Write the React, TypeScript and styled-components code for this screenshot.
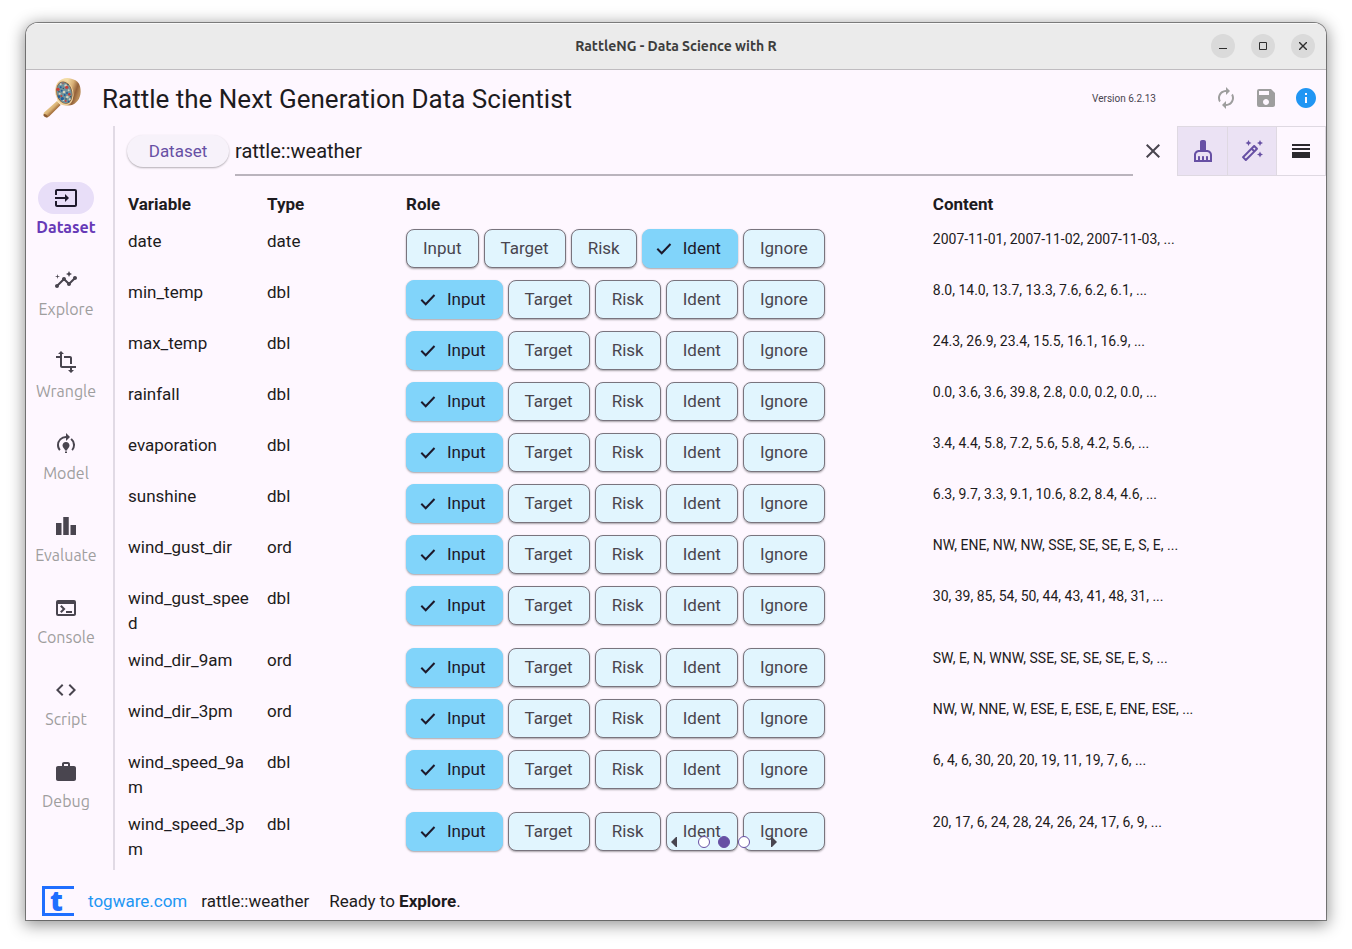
import React, { useState } from 'react';
import styled, { createGlobalStyle } from 'styled-components';
import {
  MdInput, MdInsights, MdTransform, MdModelTraining, MdLeaderboard, MdTerminal, MdCode, MdWork,
  MdAutorenew, MdSave, MdInfo, MdClear, MdOutlineAutoFixHigh, MdHorizontalSplit,
} from 'react-icons/md';

const GlobalStyle = createGlobalStyle`
  *, *::before, *::after { box-sizing: border-box; }
  body {
    margin: 0;
    background: #ffffff;
    color: #1d1b20;
    font-family: Roboto, "Liberation Sans", sans-serif;
    font-size: 17px;
    line-height: 25px;
  }
  button { font: inherit; color: inherit; border: 0; padding: 0; background: none; cursor: pointer; }
`;

const AppWindow = styled.div`
  display: flex;
  flex-direction: column;
  min-height: calc(100vh - 52px);
  margin: 23px 26px 29px;
  background: #fef7ff;
  border-radius: 12px 12px 0 0;
  overflow: hidden;
  box-shadow: 0 0 0 1px rgba(0, 0, 0, 0.42), 0 3px 16px 2px rgba(0, 0, 0, 0.42);
`;

const TitleBar = styled.header`
  display: grid;
  grid-template-columns: 1fr auto 1fr;
  align-items: center;
  height: 47px;
  padding: 0 11px;
  background: #ebebeb;
  border-bottom: 1px solid #bfbcc0;
  box-shadow: inset 0 1px 0 #f9f9f9;
`;

const WindowTitle = styled.div`
  grid-column: 2;
  font: 700 14px/20px Ubuntu, "Open Sans", sans-serif;
  color: #3d3d3d;
`;

const WindowControls = styled.div`
  display: flex;
  justify-content: flex-end;
  gap: 16px;
`;

const WindowButton = styled.button`
  display: grid;
  place-items: center;
  width: 24px;
  height: 24px;
  border-radius: 50%;
  background: #dadada;
  color: #2e2e2e;
`;

const AppBar = styled.div`
  display: flex;
  align-items: center;
  height: 56px;
  padding: 0 0 0 16px;
`;

const AppTitle = styled.h1`
  flex: 1;
  margin: 0 0 0 20px;
  padding-top: 2px;
  font-size: 26px;
  line-height: 32px;
  font-weight: 400;
`;

const Version = styled.span`
  margin-right: 50px;
  padding-top: 2px;
  font-size: 10px;
  line-height: 16px;
  color: #49454f;
`;

const BarButton = styled.button<{ $color: string }>`
  display: grid;
  place-items: center;
  width: 40px;
  height: 40px;
  font-size: 24px;
  color: ${(p) => p.$color};
`;

const BarActions = styled.div`
  display: flex;
`;

const Main = styled.div`
  display: flex;
  flex: 1;
`;

const Rail = styled.nav`
  display: flex;
  flex-direction: column;
  flex: none;
  gap: 24px;
  width: 89px;
  padding: 56px 7px 0 0;
  border-right: 2px solid #e1dae5;
`;

const RailItem = styled.button<{ $active: boolean }>`
  display: flex;
  flex-direction: column;
  align-items: center;
  height: 58px;
  font: ${(p) => (p.$active ? 700 : 400)} 16px/26px Ubuntu, "Noto Sans", sans-serif;
  color: ${(p) => (p.$active ? '#673ab7' : '#9e9e9e')};
`;

const RailIcon = styled.span<{ $active: boolean }>`
  display: grid;
  place-items: center;
  width: 56px;
  height: 32px;
  border-radius: 16px;
  font-size: 24px;
  background: ${(p) => (p.$active ? '#e8def8' : 'transparent')};
  color: ${(p) => (p.$active ? '#1d192b' : '#49454f')};
`;

const Content = styled.main`
  position: relative;
  flex: 1;
  min-width: 0;
`;

const SourceBar = styled.div`
  display: flex;
  align-items: flex-start;
  padding-left: 12px;
`;

const DatasetButton = styled.button`
  flex: none;
  width: 102px;
  height: 32px;
  margin-top: 9px;
  border-radius: 16px;
  background: #f7f2fa;
  color: #6750a4;
  box-shadow: 0 1px 2px rgba(0, 0, 0, 0.3);
`;

const PathInput = styled.input`
  flex: 1;
  min-width: 0;
  height: 50px;
  margin-left: 6px;
  padding: 2px 0 0;
  border: 0;
  border-bottom: 2px solid #bab4bd;
  outline: 0;
  background: transparent;
  color: #1d1b20;
  font: 400 20px/28px Roboto, sans-serif;
`;

const ClearButton = styled.button`
  display: grid;
  place-items: center;
  width: 40px;
  height: 50px;
  margin-right: 4px;
  font-size: 24px;
  color: #49454f;
`;

const Toggles = styled.div`
  display: flex;
  border: 1px solid #dfd9e2;
`;

const Toggle = styled.button<{ $on: boolean }>`
  display: grid;
  place-items: center;
  width: 49px;
  height: 48px;
  font-size: 24px;
  background: ${(p) => (p.$on ? '#ebe2f4' : 'transparent')};
  color: ${(p) => (p.$on ? '#6750a4' : '#2b292e')};
  & + & { border-left: 1px solid #dfd9e2; }
`;

const VariableTable = styled.table`
  width: 100%;
  margin-top: 16px;
  border-collapse: collapse;
  table-layout: fixed;
`;

const HeadCell = styled.th<{ $width?: string }>`
  width: ${(p) => p.$width ?? 'auto'};
  padding: 0 12px 0 13px;
  text-align: left;
  font-weight: 700;
`;

const Cell = styled.td`
  padding: 12px 0 0 13px;
  vertical-align: top;
  overflow-wrap: anywhere;
`;

const ContentCell = styled(Cell)`
  font-size: 14px;
  line-height: 20px;
`;

const Chips = styled.div`
  display: flex;
  gap: 5px;
`;

const Chip = styled.button<{ $selected: boolean }>`
  display: flex;
  align-items: center;
  gap: 11px;
  height: 39px;
  padding: 0 16px 0 ${(p) => (p.$selected ? 13 : 16)}px;
  border: 1px solid ${(p) => (p.$selected ? '#81d4fa' : '#79747e')};
  border-radius: 8px;
  background: ${(p) => (p.$selected ? '#81d4fa' : '#e1f5fe')};
  color: ${(p) => (p.$selected ? '#1d192b' : '#49454f')};
  box-shadow: 0 1px 2px rgba(0, 0, 0, 0.35);
`;

const Pager = styled.div`
  position: absolute;
  left: 6px;
  right: 0;
  bottom: 22px;
  display: flex;
  align-items: center;
  justify-content: center;
  gap: 8px;
  height: 12px;
`;

const Dot = styled.button<{ $current: boolean }>`
  width: 12px;
  height: 12px;
  border: 1px solid #6750a4;
  border-radius: 50%;
  background: ${(p) => (p.$current ? '#6750a4' : '#ffffff')};
`;

const PagerArrow = styled.button`
  display: grid;
  width: 32px;
  place-items: center;
  color: #49454f;
`;

const StatusBar = styled.footer`
  display: flex;
  align-items: center;
  height: 50px;
  padding: 12px 16px 0;
`;

const SiteLink = styled.a`
  margin: 0 14px;
  color: #2196f3;
  text-decoration: none;
`;

const StatusText = styled.span`
  margin-left: 20px;
`;

const MagnifierLogo = () => (
  <svg width="40" height="42" viewBox="12 12 120 126" aria-hidden="true">
    <defs>
      <linearGradient id="barrel" x1="0" y1="0" x2="1" y2="0.4">
        <stop offset="0.4" stopColor="#f3dca6" />
        <stop offset="0.65" stopColor="#d7ae74" />
        <stop offset="0.85" stopColor="#94623a" />
        <stop offset="1" stopColor="#b98c58" />
      </linearGradient>
      <linearGradient id="handle" x1="0" y1="0" x2="0.6" y2="0.6">
        <stop offset="0.3" stopColor="#f6e0ae" />
        <stop offset="0.8" stopColor="#d9b274" />
        <stop offset="1" stopColor="#a87442" />
      </linearGradient>
    </defs>
    <path d="M19 118 57 84l11 12-34 34c-5 4-11 4-15-1-3-3-3-8 0-11z" fill="url(#handle)" />
    <path d="M18 123c3-1 10 3 12 9-5 3-9 1-12-2-2-2-2-5 0-7z" fill="#8b5a33" />
    <path d="M58 30C68 16 86 13 100 17c19 4 29 17 28 40-1 21-13 36-30 40-18 2-33 0-40-12z" fill="url(#barrel)" />
    <ellipse cx="79" cy="59" rx="27" ry="38" transform="rotate(-14 79 59)" fill="#ecd09a" />
    <ellipse cx="79" cy="59" rx="24" ry="34" transform="rotate(-14 79 59)" fill="#8a5b38" />
    <ellipse cx="79" cy="59" rx="22" ry="32" transform="rotate(-14 79 59)" fill="#6f929c" />
    <g fill="#d8d2bb">
      <circle cx="68" cy="34" r="3" /><circle cx="83" cy="38" r="4" /><circle cx="92" cy="52" r="3" />
      <circle cx="78" cy="57" r="4" /><circle cx="65" cy="62" r="3" /><circle cx="88" cy="72" r="4" />
      <circle cx="95" cy="79" r="3" /><circle cx="76" cy="81" r="3" />
    </g>
    <g fill="#c8403a">
      <circle cx="60" cy="49" r="5" /><circle cx="86" cy="43" r="5" /><circle cx="70" cy="69" r="3" />
      <circle cx="94" cy="64" r="4" /><circle cx="83" cy="84" r="3" /><circle cx="75" cy="31" r="2" />
    </g>
    <g fill="#245f9a">
      <circle cx="68" cy="43" r="3" /><circle cx="71" cy="53" r="3" /><circle cx="63" cy="71" r="4" />
      <circle cx="73" cy="77" r="5" /><circle cx="87" cy="60" r="3" /><circle cx="92" cy="86" r="3" />
      <circle cx="80" cy="66" r="3" />
    </g>
    <g fill="#31454a">
      <circle cx="76" cy="46" r="2" /><circle cx="63" cy="56" r="2" /><circle cx="84" cy="78" r="2" />
      <circle cx="98" cy="71" r="2" /><circle cx="90" cy="34" r="2" />
    </g>
  </svg>
);

const TogwareLogo = styled.span`
  flex: none;
  width: 32px;
  height: 30px;
  padding-left: 5px;
  border: solid #1f6fff;
  border-width: 3px 0 3px 3px;
  color: #1f6fff;
  font: 900 28px/22px "Noto Sans", sans-serif;
`;

const CleanIcon = () => (
  <svg width="24" height="24" viewBox="0 0 24 24" fill="currentColor" aria-hidden="true">
    <path d="M16 11h-1V3c0-1.1-.9-2-2-2h-2c-1.1 0-2 .9-2 2v8H8c-2.76 0-5 2.24-5 5v7h18v-7c0-2.76-2.24-5-5-5zm3 10h-2v-3c0-.55-.45-1-1-1s-1 .45-1 1v3h-2v-3c0-.55-.45-1-1-1s-1 .45-1 1v3H9v-3c0-.55-.45-1-1-1s-1 .45-1 1v3H5v-5c0-1.65 1.35-3 3-3h8c1.65 0 3 1.35 3 3v5z" />
  </svg>
);

const CheckIcon = () => (
  <svg width="16" height="14" viewBox="0 0 16 14" fill="none" stroke="currentColor" strokeWidth="2" aria-hidden="true">
    <path d="m1.3 6.8 4.4 4.4L14.5 2" />
  </svg>
);

const railItems = [
  { label: 'Dataset', icon: <MdInput /> },
  { label: 'Explore', icon: <MdInsights /> },
  { label: 'Wrangle', icon: <MdTransform /> },
  { label: 'Model', icon: <MdModelTraining /> },
  { label: 'Evaluate', icon: <MdLeaderboard /> },
  { label: 'Console', icon: <MdTerminal /> },
  { label: 'Script', icon: <MdCode /> },
  { label: 'Debug', icon: <MdWork /> },
];

const roles = ['Input', 'Target', 'Risk', 'Ident', 'Ignore'];

const variables = [
  { name: 'date', type: 'date', role: 'Ident', content: '2007-11-01, 2007-11-02, 2007-11-03, ...' },
  { name: 'min_temp', type: 'dbl', role: 'Input', content: '8.0, 14.0, 13.7, 13.3, 7.6, 6.2, 6.1, ...' },
  { name: 'max_temp', type: 'dbl', role: 'Input', content: '24.3, 26.9, 23.4, 15.5, 16.1, 16.9, ...' },
  { name: 'rainfall', type: 'dbl', role: 'Input', content: '0.0, 3.6, 3.6, 39.8, 2.8, 0.0, 0.2, 0.0, ...' },
  { name: 'evaporation', type: 'dbl', role: 'Input', content: '3.4, 4.4, 5.8, 7.2, 5.6, 5.8, 4.2, 5.6, ...' },
  { name: 'sunshine', type: 'dbl', role: 'Input', content: '6.3, 9.7, 3.3, 9.1, 10.6, 8.2, 8.4, 4.6, ...' },
  { name: 'wind_gust_dir', type: 'ord', role: 'Input', content: 'NW, ENE, NW, NW, SSE, SE, SE, E, S, E, ...' },
  { name: 'wind_gust_speed', type: 'dbl', role: 'Input', content: '30, 39, 85, 54, 50, 44, 43, 41, 48, 31, ...' },
  { name: 'wind_dir_9am', type: 'ord', role: 'Input', content: 'SW, E, N, WNW, SSE, SE, SE, SE, E, S, ...' },
  { name: 'wind_dir_3pm', type: 'ord', role: 'Input', content: 'NW, W, NNE, W, ESE, E, ESE, E, ENE, ESE, ...' },
  { name: 'wind_speed_9am', type: 'dbl', role: 'Input', content: '6, 4, 6, 30, 20, 20, 19, 11, 19, 7, 6, ...' },
  { name: 'wind_speed_3pm', type: 'dbl', role: 'Input', content: '20, 17, 6, 24, 28, 24, 26, 24, 17, 6, 9, ...' },
];

export default function App() {
  const [active, setActive] = useState('Dataset');
  const [path, setPath] = useState('rattle::weather');
  const [page, setPage] = useState(1);
  const [chosen, setChosen] = useState(variables.map((v) => v.role));

  return (
    <>
      <GlobalStyle />
      <AppWindow>
        <TitleBar>
          <WindowTitle>RattleNG - Data Science with R</WindowTitle>
          <WindowControls>
            <WindowButton aria-label="Minimize">
              <svg width="8" height="8"><path d="M0 6.5h8" stroke="currentColor" /></svg>
            </WindowButton>
            <WindowButton aria-label="Maximize">
              <svg width="8" height="8"><path d="M.5.5h7v7h-7z" fill="none" stroke="currentColor" /></svg>
            </WindowButton>
            <WindowButton aria-label="Close">
              <svg width="8" height="8"><path d="m0 0 8 8M8 0 0 8" stroke="currentColor" strokeWidth="1.4" /></svg>
            </WindowButton>
          </WindowControls>
        </TitleBar>
        <AppBar>
          <MagnifierLogo />
          <AppTitle>Rattle the Next Generation Data Scientist</AppTitle>
          <Version>Version 6.2.13</Version>
          <BarActions>
            <BarButton $color="#9e9e9e" aria-label="Reset"><MdAutorenew /></BarButton>
            <BarButton $color="#9e9e9e" aria-label="Save"><MdSave /></BarButton>
            <BarButton $color="#2196f3" aria-label="About"><MdInfo /></BarButton>
          </BarActions>
        </AppBar>
        <Main>
          <Rail>
            {railItems.map((item) => (
              <RailItem key={item.label} $active={item.label === active} onClick={() => setActive(item.label)}>
                <RailIcon $active={item.label === active}>{item.icon}</RailIcon>
                {item.label}
              </RailItem>
            ))}
          </Rail>
          <Content>
            <SourceBar>
              <DatasetButton>Dataset</DatasetButton>
              <PathInput aria-label="Dataset path" value={path} onChange={(e) => setPath(e.target.value)} />
              <ClearButton aria-label="Clear" onClick={() => setPath('')}><MdClear /></ClearButton>
              <Toggles>
                <Toggle $on aria-label="Cleanse"><CleanIcon /></Toggle>
                <Toggle $on aria-label="Unify"><MdOutlineAutoFixHigh /></Toggle>
                <Toggle $on={false} aria-label="Partition"><MdHorizontalSplit /></Toggle>
              </Toggles>
            </SourceBar>
            <VariableTable>
              <thead>
                <tr>
                  <HeadCell $width="139px">Variable</HeadCell>
                  <HeadCell $width="139px">Type</HeadCell>
                  <HeadCell $width="43.5%">Role</HeadCell>
                  <HeadCell>Content</HeadCell>
                </tr>
              </thead>
              <tbody>
                {variables.map((v, row) => (
                  <tr key={v.name}>
                    <Cell>{v.name}</Cell>
                    <Cell>{v.type}</Cell>
                    <Cell>
                      <Chips>
                        {roles.map((role) => (
                          <Chip
                            key={role}
                            $selected={chosen[row] === role}
                            aria-pressed={chosen[row] === role}
                            onClick={() => setChosen(chosen.map((c, i) => (i === row ? role : c)))}
                          >
                            {chosen[row] === role && <CheckIcon />}
                            {role}
                          </Chip>
                        ))}
                      </Chips>
                    </Cell>
                    <ContentCell>{v.content}</ContentCell>
                  </tr>
                ))}
              </tbody>
            </VariableTable>
            <Pager>
              <PagerArrow aria-label="Previous page" onClick={() => setPage(Math.max(0, page - 1))}>
                <svg width="6" height="10"><path d="M6 0v10H5L0 5l5-5z" fill="currentColor" /></svg>
              </PagerArrow>
              {[0, 1, 2].map((n) => (
                <Dot key={n} $current={n === page} aria-label={`Page ${n + 1}`} onClick={() => setPage(n)} />
              ))}
              <PagerArrow aria-label="Next page" onClick={() => setPage(Math.min(2, page + 1))}>
                <svg width="6" height="10"><path d="M0 0v10h1l5-5-5-5z" fill="currentColor" /></svg>
              </PagerArrow>
            </Pager>
          </Content>
        </Main>
        <StatusBar>
          <TogwareLogo aria-hidden="true">t</TogwareLogo>
          <SiteLink href="#togware">togware.com</SiteLink>
          <span>rattle::weather</span>
          <StatusText>Ready to <b>Explore</b>.</StatusText>
        </StatusBar>
      </AppWindow>
    </>
  );
}
